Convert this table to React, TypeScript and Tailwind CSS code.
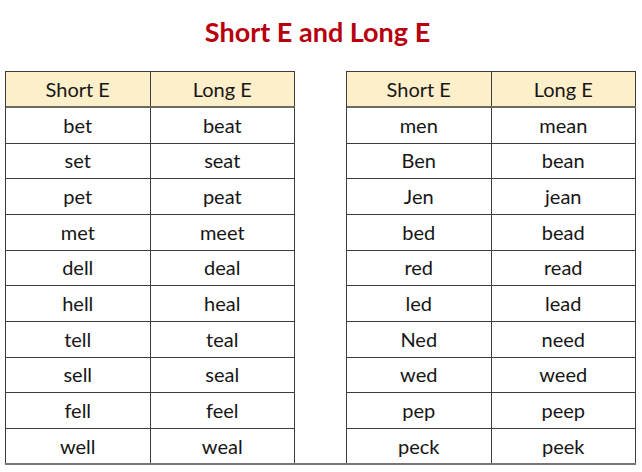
const rowsLeft: [string, string][] = [
  ['bet', 'beat'],
  ['set', 'seat'],
  ['pet', 'peat'],
  ['met', 'meet'],
  ['dell', 'deal'],
  ['hell', 'heal'],
  ['tell', 'teal'],
  ['sell', 'seal'],
  ['fell', 'feel'],
  ['well', 'weal'],
];

const rowsRight: [string, string][] = [
  ['men', 'mean'],
  ['Ben', 'bean'],
  ['Jen', 'jean'],
  ['bed', 'bead'],
  ['red', 'read'],
  ['led', 'lead'],
  ['Ned', 'need'],
  ['wed', 'weed'],
  ['pep', 'peep'],
  ['peck', 'peek'],
];

function WordTable({ rows }: { rows: [string, string][] }) {
  return (
    <div className="w-[290px] border-l border-t border-[#3c3c3c]">
      <div className="grid grid-cols-2 h-[36px] bg-[#fdefc9] border-b-2 border-[#6e6a5c]">
        <div className="flex items-center justify-center border-r border-[#3c3c3c]">Short E</div>
        <div className="flex items-center justify-center border-r border-[#3c3c3c]">Long E</div>
      </div>
      {rows.map(([s, l], i) => (
        <div
          key={s}
          className={
            i === rows.length - 1
              ? 'grid grid-cols-2 h-[34.5px]'
              : 'grid grid-cols-2 h-[35.67px] border-b border-[#3c3c3c]'
          }
        >
          <div className="flex items-center justify-center border-r border-[#3c3c3c] pb-[1px]">{s}</div>
          <div className="flex items-center justify-center border-r border-[#3c3c3c] pb-[1px]">{l}</div>
        </div>
      ))}
    </div>
  );
}

export default function App() {
  return (
    <div className="w-[642px] h-[472px] bg-white text-[#161616] font-['Lato',sans-serif] text-[20px] overflow-hidden">
      <h1 className="pt-[14px] h-[71px] text-center pr-[7px] text-[27px] font-bold text-[#b8000c] leading-[36px]">
        Short E and Long E
      </h1>
      <div className="ml-[5px] w-[631px] flex justify-between border-b-2 border-[#767676]">
        <WordTable rows={rowsLeft} />
        <WordTable rows={rowsRight} />
      </div>
    </div>
  );
}
